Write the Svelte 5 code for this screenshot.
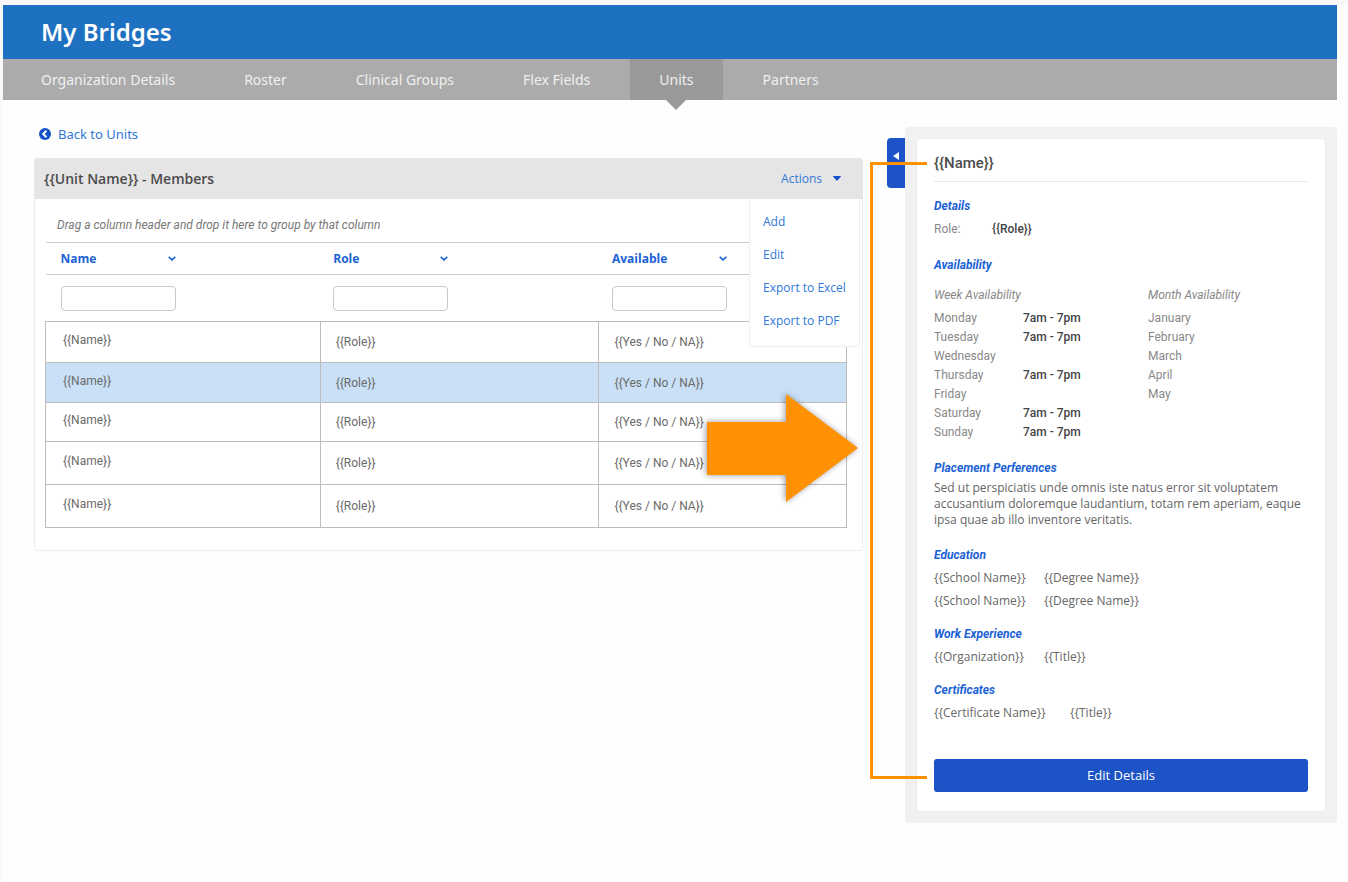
<script lang="ts">
	type Pair = [string, string];

	const tabs = ['Organization Details', 'Roster', 'Clinical Groups', 'Flex Fields', 'Units', 'Partners'];
	const columns = ['Name', 'Role', 'Available'];
	const actions = ['Add', 'Edit', 'Export to Excel', 'Export to PDF'];
	const months = ['January', 'February', 'March', 'April', 'May'];

	const week: Pair[] = [
		['Monday', '7am - 7pm'],
		['Tuesday', '7am - 7pm'],
		['Wednesday', ''],
		['Thursday', '7am - 7pm'],
		['Friday', ''],
		['Saturday', '7am - 7pm'],
		['Sunday', '7am - 7pm']
	];
	const education: Pair[] = [
		['{{School Name}}', '{{Degree Name}}'],
		['{{School Name}}', '{{Degree Name}}']
	];

	const members = Array.from({ length: 5 }, () => ({
		name: '{{Name}}',
		role: '{{Role}}',
		available: '{{Yes / No / NA}}'
	}));

	let activeTab = $state('Units');
	let selected = $state(1);
	let menuOpen = $state(true);
</script>

<svelte:head>
	<title>My Bridges</title>
</svelte:head>

<div class="page">
	<header class="brand">
		<h1>My Bridges</h1>
	</header>

	<nav class="tabs">
		{#each tabs as tab}
			<a href="#units" class:active={tab === activeTab} onclick={() => (activeTab = tab)}>{tab}</a>
		{/each}
	</nav>

	<main class="content">
		<section class="unit">
			<a class="back" href="#back">
				<svg width="12" height="12" viewBox="0 0 12 12" aria-hidden="true">
					<circle cx="6" cy="6" r="6" fill="#1450c8" />
					<path d="M7.4 2.8 4.2 6l3.2 3.2" fill="none" stroke="#fff" stroke-width="2" />
				</svg>
				Back to Units
			</a>

			<div class="card">
				<div class="card-head">
					<h2>{'{{Unit Name}} - Members'}</h2>
					<button class="actions" aria-expanded={menuOpen} onclick={() => (menuOpen = !menuOpen)}>
						Actions
						<svg width="8" height="5" viewBox="0 0 8 5" aria-hidden="true">
							<path d="M.5 0h7a.4.4 0 0 1 .3.7L4.4 4.6a.6.6 0 0 1-.8 0L.2.7A.4.4 0 0 1 .5 0z" fill="#1450c8" />
						</svg>
					</button>
					{#if menuOpen}
						<div class="menu">
							{#each actions as action}
								<button>{action}</button>
							{/each}
						</div>
					{/if}
				</div>

				<div class="grid">
					<p class="hint">Drag a column header and drop it here to group by that column</p>
					<table>
						<thead>
							<tr class="titles">
								{#each columns as column}
									<th scope="col">
										<button class="sort">
											{column}
											<svg width="8" height="5" viewBox="0 0 8 5" aria-hidden="true">
												<path d="M.7.8 4 3.8 7.3.8" fill="none" stroke="#1b62d6" stroke-width="1.6" />
											</svg>
										</button>
									</th>
								{/each}
							</tr>
							<tr class="filters">
								{#each columns as column}
									<td><input type="text" aria-label="Filter {column}" /></td>
								{/each}
							</tr>
						</thead>
						<tbody>
							{#each members as member, i}
								<tr class:selected={i === selected} onclick={() => (selected = i)}>
									<td>{member.name}</td>
									<td>{member.role}</td>
									<td>{member.available}</td>
								</tr>
							{/each}
						</tbody>
					</table>
				</div>

				<svg class="arrow" width="152" height="110" viewBox="0 0 152 110" aria-hidden="true">
					<path d="M0 28h79V0l72 54-72 54V81H0z" fill="#ff9103" />
				</svg>
			</div>
		</section>

		<aside class="drawer">
			<button class="toggle" aria-label="Collapse details">
				<svg width="6" height="8" viewBox="0 0 6 8" aria-hidden="true">
					<path d="M6 0v8L0 4z" fill="#fff" />
				</svg>
			</button>

			<div class="drawer-frame">
				<div class="details">
					<h2>{'{{Name}}'}</h2>

					<h3>Details</h3>
					<dl class="role">
						<dt>Role:</dt>
						<dd>{'{{Role}}'}</dd>
					</dl>

					<h3>Availability</h3>
					<div class="availability">
						<div>
							<h4>Week Availability</h4>
							<dl class="week">
								{#each week as [day, hours]}
									<dt>{day}</dt>
									<dd>{hours}</dd>
								{/each}
							</dl>
						</div>
						<div>
							<h4>Month Availability</h4>
							<ul>
								{#each months as month}
									<li>{month}</li>
								{/each}
							</ul>
						</div>
					</div>

					<h3>Placement Perferences</h3>
					<p>
						Sed ut perspiciatis unde omnis iste natus error sit voluptatem accusantium doloremque
						laudantium, totam rem aperiam, eaque ipsa quae ab illo inventore veritatis.
					</p>

					<h3>Education</h3>
					{#each education as [school, degree]}
						<div class="pair"><span>{school}</span><span>{degree}</span></div>
					{/each}

					<h3>Work Experience</h3>
					<div class="pair"><span>{'{{Organization}}'}</span><span>{'{{Title}}'}</span></div>

					<h3>Certificates</h3>
					<div class="pair wide"><span>{'{{Certificate Name}}'}</span><span>{'{{Title}}'}</span></div>

					<button class="edit">Edit Details</button>
				</div>
			</div>

			<div class="bracket"></div>
		</aside>
	</main>
</div>

<style>
	:global(body) {
		margin: 0;
		background: #fefefe;
	}

	.page {
		box-sizing: border-box;
		min-height: 100vh;
		border-top: 5px solid #f8f8f8;
		border-left: 3px solid #fafafa;
		padding-right: 11px;
		color: #555;
		font-family: 'Open Sans', 'Noto Sans', sans-serif;
		font-size: 12px;
	}

	h1,
	h2,
	h3,
	h4,
	p,
	ul,
	dl,
	dd {
		margin: 0;
		padding: 0;
	}

	ul {
		list-style: none;
	}

	button {
		border: 0;
		background: none;
		padding: 0;
		font: inherit;
		cursor: pointer;
	}

	a {
		text-decoration: none;
	}

	svg {
		display: block;
		flex: none;
	}

	.brand {
		background: #1e70c1;
		padding: 0 38px;
	}

	h1 {
		color: #fff;
		font-family: 'Noto Sans', sans-serif;
		font-size: 24px;
		font-weight: 600;
		line-height: 54px;
	}

	.tabs {
		display: flex;
		gap: 11px;
		background: #ababab;
		padding: 0 9px;
	}

	.tabs a {
		position: relative;
		padding: 0 29px;
		color: #f0f0f0;
		font-family: 'Noto Sans', sans-serif;
		font-size: 14px;
		line-height: 41px;
	}

	.tabs .active {
		background: #999;
	}

	.tabs .active::after {
		position: absolute;
		top: 100%;
		left: calc(50% - 10px);
		border: 10px solid transparent;
		border-top-color: #999;
		border-bottom: 0;
		content: '';
	}

	.content {
		display: grid;
		grid-template-columns: minmax(0, 829fr) minmax(0, 450fr);
		align-items: start;
		gap: 24px;
		padding: 27px 0 27px 31px;
	}

	.back {
		display: inline-flex;
		align-items: center;
		gap: 7px;
		margin: -3px 0 0 5px;
		color: #3078d8;
		font-family: 'Noto Sans', sans-serif;
		font-size: 13px;
		line-height: 20px;
	}

	.card {
		position: relative;
		margin-top: 14px;
		border: 1px solid #ececec;
		border-radius: 4px;
		background: #fff;
	}

	.card-head {
		position: relative;
		display: flex;
		align-items: center;
		justify-content: space-between;
		margin: -1px;
		border-radius: 4px 4px 0 0;
		background: #e5e5e5;
		padding: 0 22px 0 10px;
		line-height: 41px;
	}

	.card-head h2 {
		color: #4c4c4c;
		font-size: 14px;
		font-weight: 600;
	}

	.actions {
		display: flex;
		align-items: center;
		gap: 11px;
		color: #3078d8;
	}

	.menu {
		position: absolute;
		z-index: 1;
		top: 100%;
		right: 3px;
		display: flex;
		flex-direction: column;
		align-items: flex-start;
		box-sizing: border-box;
		width: 111px;
		border: 1px solid #eee;
		border-top: 0;
		border-radius: 0 0 4px 4px;
		background: #fff;
		padding: 6px 0 9px 13px;
	}

	.menu button {
		color: #3078d8;
		line-height: 33px;
		white-space: nowrap;
	}

	.grid {
		padding: 0 15px 22px 10px;
	}

	.hint {
		padding: 17px 12px 7px;
		color: #777;
		font-family: Roboto, sans-serif;
		font-style: italic;
		line-height: 20px;
	}

	table {
		width: 100%;
		border-collapse: collapse;
		table-layout: fixed;
	}

	th,
	td {
		box-sizing: border-box;
		padding: 0 15px;
		text-align: left;
	}

	th:first-child {
		width: 34.3%;
	}

	th:nth-child(2) {
		width: 34.8%;
	}

	th:not(:first-child),
	thead td:not(:first-child) {
		padding-left: 13px;
	}

	.titles {
		height: 32px;
		border-top: 1px solid #ccc;
		border-bottom: 1px solid #ccc;
	}

	.sort {
		display: flex;
		align-items: center;
		justify-content: space-between;
		width: 115px;
		color: #1b62d6;
		font-weight: 700;
	}

	.filters {
		height: 47px;
	}

	input {
		display: block;
		box-sizing: border-box;
		width: 115px;
		height: 25px;
		border: 1px solid #c8c8c8;
		border-radius: 4px;
		background: #fff;
		font: inherit;
	}

	tbody tr {
		height: 39px;
		color: #6b6b6b;
		font-family: Roboto, sans-serif;
	}

	tbody tr:first-child {
		height: 41px;
	}

	tbody tr:nth-child(2) {
		height: 40px;
	}

	tbody tr:nth-child(n + 4) {
		height: 43px;
	}

	tbody td {
		border: 1px solid #bdbdbd;
	}

	tbody td:first-child {
		padding: 0 15px 4px 17px;
	}

	.selected {
		background: #c9e0f6;
	}

	.arrow {
		position: absolute;
		z-index: 2;
		top: 235px;
		right: 3px;
		overflow: visible;
		filter: drop-shadow(-1px 0 3px rgba(0, 0, 0, 0.4));
	}

	.drawer {
		position: relative;
		display: flex;
		align-items: flex-start;
	}

	.toggle {
		display: flex;
		justify-content: center;
		width: 18px;
		height: 50px;
		margin-top: 11px;
		border-radius: 4px 0 0 4px;
		background: #1c53c6;
		padding-top: 14px;
	}

	.drawer-frame {
		flex: 1;
		min-width: 0;
		border-radius: 4px;
		background: #f1f1f1;
		padding: 11px;
	}

	.details {
		border: 1px solid #ebebeb;
		border-radius: 4px;
		background: #fff;
		padding: 12px 17px 19px;
		color: #666;
		line-height: 18px;
	}

	.details h2 {
		border-bottom: 1px solid #e8e8e8;
		padding-bottom: 6px;
		color: #4c4c4c;
		font-family: Roboto, sans-serif;
		font-size: 15px;
		font-weight: 500;
		line-height: 24px;
	}

	.details h3 {
		margin: 15px 0 5px;
		color: #1b62d6;
		font-family: Roboto, sans-serif;
		font-size: 12px;
		font-style: italic;
		font-weight: 700;
	}

	.details dl,
	.details ul,
	.details h4 {
		color: #888;
		font-family: Roboto, sans-serif;
	}

	.details dd {
		color: #444;
		font-weight: 500;
	}

	.role {
		display: grid;
		grid-template-columns: 58px 1fr;
		margin-bottom: 18px;
	}

	.availability {
		display: grid;
		grid-template-columns: 214px 1fr;
		margin: 12px 0 17px;
		line-height: 19px;
	}

	h4 {
		margin-bottom: 5px;
		font-size: 12px;
		font-style: italic;
		font-weight: 400;
		line-height: 18px;
	}

	.week {
		display: grid;
		grid-template-columns: 89px 1fr;
	}

	.details p {
		margin: -2px 0 18px;
		line-height: 16px;
	}

	.pair {
		display: grid;
		grid-template-columns: 110px 1fr;
		margin-bottom: 5px;
	}

	.wide {
		grid-template-columns: 136px 1fr;
	}

	.edit {
		display: block;
		width: 100%;
		margin-top: 37px;
		border-radius: 3px;
		background: #1c53c6;
		color: #fff;
		font-size: 13px;
		line-height: 33px;
	}

	.bracket {
		position: absolute;
		top: 35px;
		bottom: 44px;
		left: -17px;
		width: 54px;
		border: 3px solid #ff9103;
		border-right: 0;
		pointer-events: none;
	}
</style>
